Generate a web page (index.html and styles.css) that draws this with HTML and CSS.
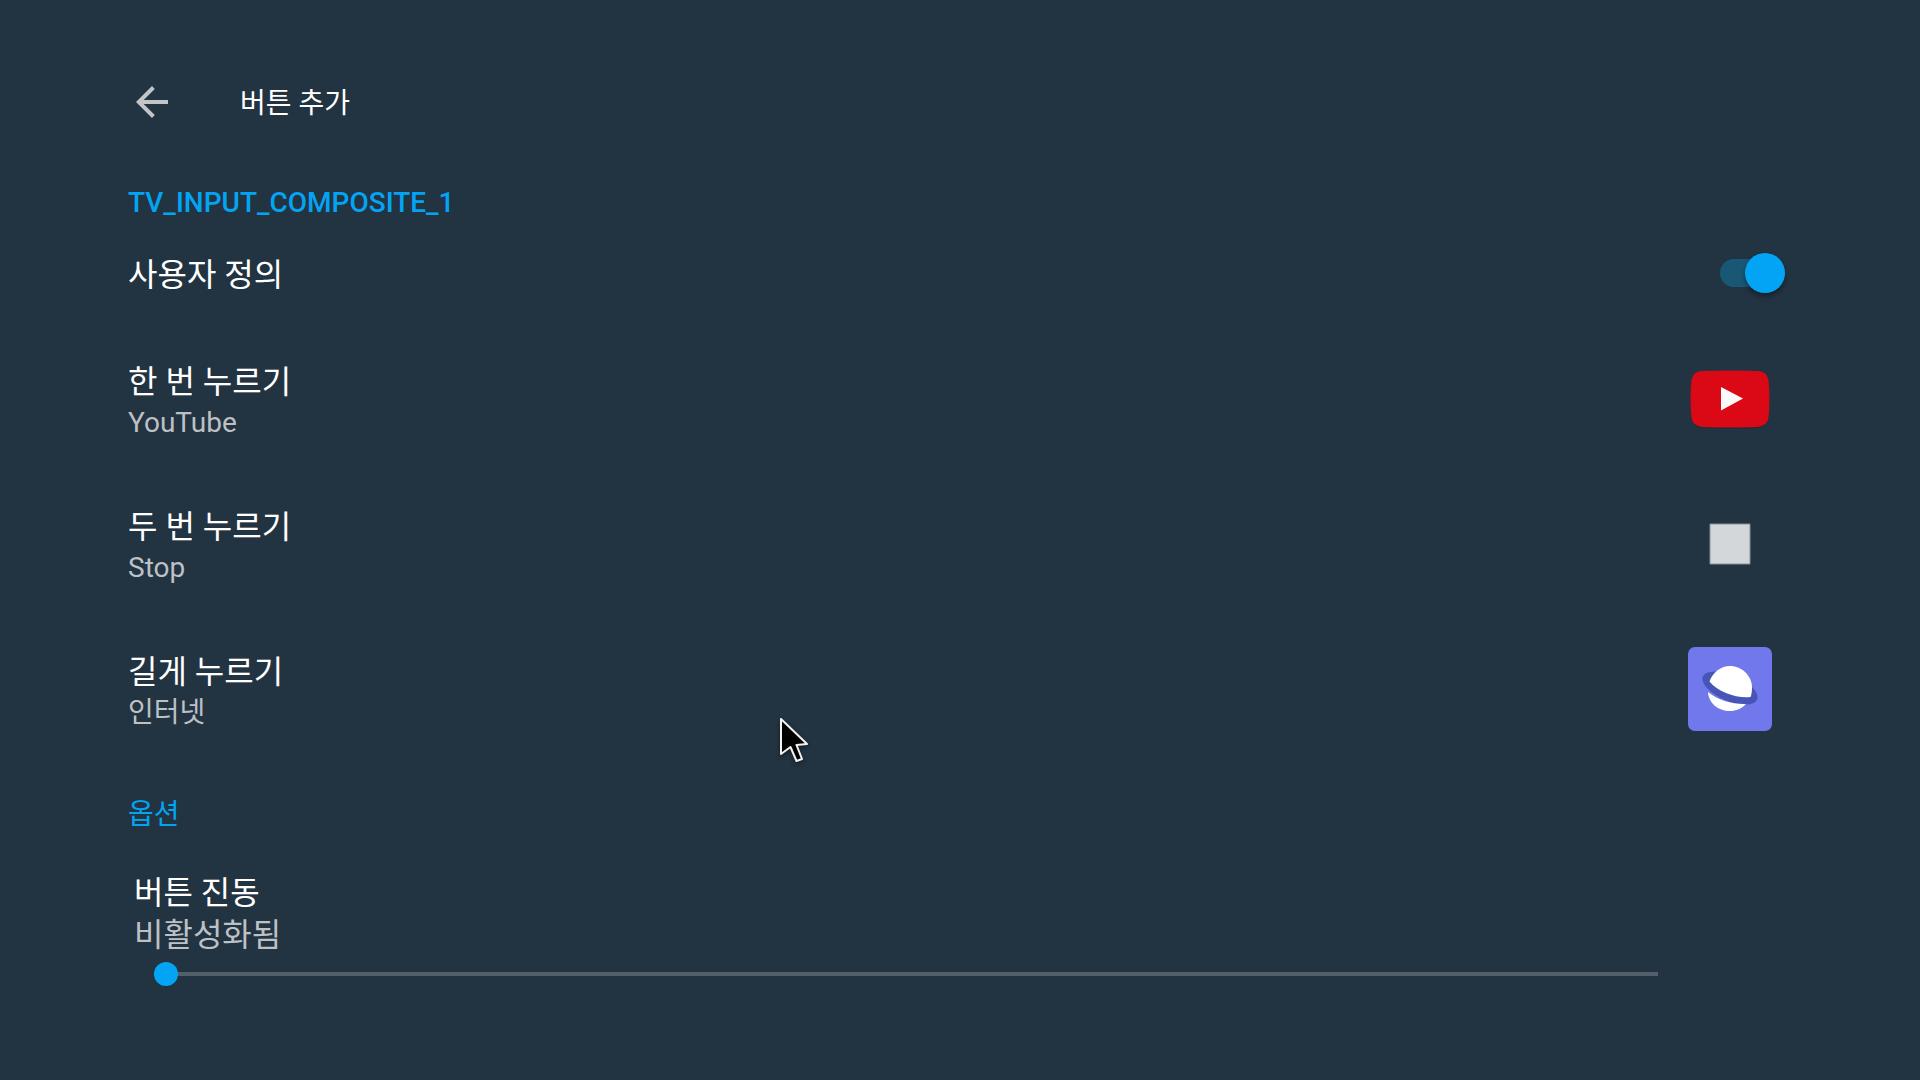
FILE: index.html
```
<!DOCTYPE html>
<html lang="ko">
<head>
<meta charset="utf-8">
<meta name="viewport" content="width=device-width, initial-scale=1">
<title>버튼 추가</title>
<link rel="stylesheet" href="styles.css">
</head>
<body>
<header class="app-bar">
  <button class="back" type="button" aria-label="뒤로">
    <svg viewBox="0 0 48 48" width="48" height="48" aria-hidden="true"><path d="M40 22H15.700L26.800 10.900 24 8 8 24l16 16 2.800-2.900L15.700 26H40z" fill="#c1c5c9"/></svg>
  </button>
  <h1 class="title">버튼 추가</h1>
</header>
<main>
  <section>
    <h2 class="section-title">TV_INPUT_COMPOSITE_1</h2>
    <div class="item item-switch">
      <label class="switch-label" for="custom">사용자 정의</label>
      <input class="switch" type="checkbox" role="switch" id="custom" checked>
    </div>
    <button class="item" type="button">
      <span class="item-text"><span>한 번 누르기</span><span class="item-value">YouTube</span></span>
      <svg class="icon" viewBox="0 0 84 84" aria-hidden="true">
        <path d="M14 14Q42 12.500 70 14Q79 14.500 80.500 23Q82.500 42 80.500 61Q79 69 70 70Q42 71.500 14 70Q5 69 3.500 61Q1.500 42 3.500 23Q5 14.500 14 14Z" fill="#172832" opacity=".6" transform="translate(0 1)"/>
        <path d="M14 14Q42 13 70 14Q79 14.500 80.500 23Q82.500 42 80.500 61Q79 69 70 70Q42 71 14 70Q5 69 3.500 61Q1.500 42 3.500 23Q5 14.500 14 14Z" fill="#db0916"/>
        <path d="M33 30L55 41.500 33 53.500z" fill="#fafafa"/>
      </svg>
    </button>
    <button class="item" type="button">
      <span class="item-text"><span>두 번 누르기</span><span class="item-value">Stop</span></span>
      <svg class="icon" viewBox="0 0 84 84" aria-hidden="true"><path d="M22 22h40v40H22z" fill="#d3d7da" stroke="#87929a"/></svg>
    </button>
    <button class="item" type="button">
      <span class="item-text"><span>길게 누르기</span><span class="item-value">인터넷</span></span>
      <svg class="icon" viewBox="0 0 84 84" aria-hidden="true">
        <rect width="84" height="84" rx="7" fill="#7078eb"/>
        <ellipse cx="42" cy="41" rx="29.500" ry="13" transform="rotate(23 42 41)" fill="#4855b7"/>
        <path d="M21.500 34.500C25 25 33 19 42 19C54 19 64 29 64 40.500C64 44 63.500 48 62.500 50C49 51.500 30 45.500 21.500 34.500Z" fill="#fff"/>
        <path d="M20 45C30 53.500 45 57.500 58 57C54 61.500 48 64 42 64C30 64 20.500 56 20 45Z" fill="#fff"/>
      </svg>
    </button>
  </section>
  <section class="options">
    <h2 class="section-title">옵션</h2>
    <div class="range-item">
      <label for="vibration">버튼 진동</label>
      <output class="range-value" for="vibration">비활성화됨</output>
      <input class="range" type="range" id="vibration" min="0" max="100" value="0">
    </div>
  </section>
</main>
<svg class="pointer" viewBox="0 0 36 52" width="36" height="52" aria-hidden="true">
  <path d="M4 3V38L13.500 31L19.500 45L25 43L19.500 29L30 28Z" fill="#000" stroke="#f2f2f2" stroke-width="2" stroke-linejoin="round"/>
</svg>
</body>
</html>
```
FILE: styles.css
```
* { box-sizing: border-box; }

body {
  margin: 0;
  min-height: 100vh;
  background: #223341;
  color: #fff;
  font-family: Roboto, "Noto Sans CJK KR", sans-serif;
  font-size: 32px;
  line-height: 40px;
}

button {
  margin: 0;
  border: 0;
  background: none;
  color: inherit;
  font: inherit;
  text-align: left;
}

.app-bar {
  display: flex;
  align-items: center;
  gap: 64px;
  padding: 78px 128px 0;
}

.back {
  padding: 0;
  height: 48px;
}

.back svg { display: block; }

.title {
  margin: 0;
  padding-top: 4px;
  font-size: 28px;
  font-weight: 400;
}

main { padding-top: 57px; }

.section-title {
  margin: 0;
  padding: 0 128px;
  color: #03a4f4;
  font-size: 28px;
  font-weight: 500;
}

.item {
  display: flex;
  align-items: center;
  justify-content: space-between;
  width: 100%;
  min-height: 145px;
  padding: 0 148px 0 128px;
}

.item-switch {
  min-height: 103px;
  padding-right: 135px;
  padding-bottom: 4px;
}

.switch-label { padding-top: 4px; }

.item-text {
  display: flex;
  flex-direction: column;
  padding-top: 8px;
}

.item-value {
  color: #bdc1c6;
  font-size: 28px;
  line-height: 42px;
}

.icon {
  width: 84px;
  height: 84px;
}

.switch {
  display: flex;
  align-items: center;
  justify-content: flex-end;
  appearance: none;
  width: 65px;
  height: 28px;
  margin: 0;
  border-radius: 14px;
  background: #195875;
}

.switch::before {
  content: "";
  width: 40px;
  height: 40px;
  border-radius: 50%;
  background: #03a4f4;
  box-shadow: 0 3px 5px rgba(0, 0, 0, 0.4);
}

.switch:not(:checked) { justify-content: flex-start; }

.options { padding-top: 34px; }

.options .section-title { font-weight: 400; }

.range-item {
  display: flex;
  flex-direction: column;
  padding: 38px 262px 0 134px;
}

.range-value {
  color: #bdc1c6;
  line-height: 44px;
}

.range {
  appearance: none;
  height: 24px;
  margin: 5px 0 0 20px;
  background: none;
}

.range::-webkit-slider-runnable-track {
  height: 4px;
  background: #53606c;
}

.range::-webkit-slider-thumb {
  appearance: none;
  width: 24px;
  height: 24px;
  margin-top: -10px;
  border-radius: 50%;
  background: #03a4f4;
}

/* The pointer floats over the page. */
.pointer {
  position: absolute;
  left: 777px;
  top: 716px;
  filter: drop-shadow(0 2px 2px rgba(0, 0, 0, 0.4));
  pointer-events: none;
}
```
